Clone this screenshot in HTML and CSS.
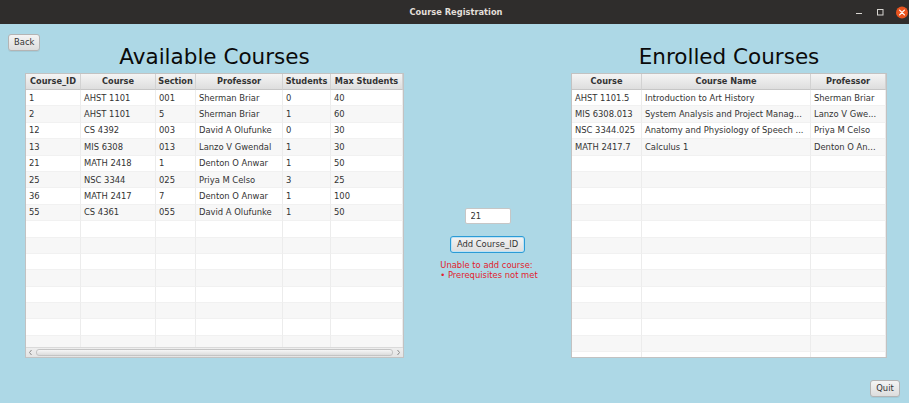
FILE: index.html
```html
<!DOCTYPE html>
<html lang="en">
<head>
<meta charset="utf-8">
<title>Course Registration</title>
<link rel="stylesheet" href="styles.css">
</head>
<body>
<div class="window">
  <header class="titlebar">
    <span class="title">Course Registration</span>
    <svg class="controls" width="59" height="24" viewBox="0 0 59 24" aria-hidden="true">
      <line x1="6" y1="13.5" x2="12" y2="13.5" stroke="#d8d6d2" stroke-width="1"/>
      <rect x="27.5" y="9.5" width="5.5" height="5.5" fill="none" stroke="#d8d6d2" stroke-width="1"/>
      <circle cx="52" cy="12.5" r="6" fill="#e9541f"/>
      <path d="M49.6 10.1 L54.4 14.9 M54.4 10.1 L49.6 14.9" stroke="#fff" stroke-width="1.2" stroke-linecap="round"/>
    </svg>
  </header>

  <main class="content">
    <button class="btn btn-back">Back</button>
    <h1 class="heading heading-left">Available Courses</h1>
    <h1 class="heading heading-right">Enrolled Courses</h1>

    <section class="tv tv-left">
      <div class="tv-viewport">
        <table class="grid">
          <colgroup><col style="width:55px"><col style="width:75px"><col style="width:40px"><col style="width:87px"><col style="width:48px"><col style="width:72px"></colgroup>
          <thead><tr><th>Course_ID</th><th>Course</th><th>Section</th><th>Professor</th><th>Students</th><th>Max Students</th></tr></thead>
          <tbody>
            <tr><td>1</td><td>AHST 1101</td><td>001</td><td>Sherman Briar</td><td>0</td><td>40</td></tr>
            <tr><td>2</td><td>AHST 1101</td><td>5</td><td>Sherman Briar</td><td>1</td><td>60</td></tr>
            <tr><td>12</td><td>CS 4392</td><td>003</td><td>David A Olufunke</td><td>0</td><td>30</td></tr>
            <tr><td>13</td><td>MIS 6308</td><td>013</td><td>Lanzo V Gwendal</td><td>1</td><td>30</td></tr>
            <tr><td>21</td><td>MATH 2418</td><td>1</td><td>Denton O Anwar</td><td>1</td><td>50</td></tr>
            <tr><td>25</td><td>NSC 3344</td><td>025</td><td>Priya M Celso</td><td>3</td><td>25</td></tr>
            <tr><td>36</td><td>MATH 2417</td><td>7</td><td>Denton O Anwar</td><td>1</td><td>100</td></tr>
            <tr><td>55</td><td>CS 4361</td><td>055</td><td>David A Olufunke</td><td>1</td><td>50</td></tr>
            <tr><td></td><td></td><td></td><td></td><td></td><td></td></tr>
            <tr><td></td><td></td><td></td><td></td><td></td><td></td></tr>
            <tr><td></td><td></td><td></td><td></td><td></td><td></td></tr>
            <tr><td></td><td></td><td></td><td></td><td></td><td></td></tr>
            <tr><td></td><td></td><td></td><td></td><td></td><td></td></tr>
            <tr><td></td><td></td><td></td><td></td><td></td><td></td></tr>
            <tr><td></td><td></td><td></td><td></td><td></td><td></td></tr>
            <tr><td></td><td></td><td></td><td></td><td></td><td></td></tr>
            <tr><td></td><td></td><td></td><td></td><td></td><td></td></tr>
          </tbody>
        </table>
      </div>
      <div class="hscroll">
        <svg class="arrow" width="9" height="9" viewBox="0 0 9 9"><path d="M5.5 2 L3.5 4.5 L5.5 7" fill="none" stroke="#8c8c8c" stroke-width="1"/></svg>
        <div class="thumb"></div>
        <svg class="arrow" width="9" height="9" viewBox="0 0 9 9"><path d="M3.5 2 L5.5 4.5 L3.5 7" fill="none" stroke="#8c8c8c" stroke-width="1"/></svg>
      </div>
    </section>

    <section class="center">
      <input class="field" type="text" value="21">
      <button class="btn btn-add">Add Course_ID</button>
      <p class="error">Unable to add course:<br>&bull; Prerequisites not met</p>
    </section>

    <section class="tv tv-right">
      <div class="tv-viewport">
        <table class="grid">
          <colgroup><col style="width:70px"><col style="width:169px"><col style="width:75px"></colgroup>
          <thead><tr><th>Course</th><th>Course Name</th><th>Professor</th></tr></thead>
          <tbody>
            <tr><td>AHST 1101.5</td><td>Introduction to Art History</td><td>Sherman Briar</td></tr>
            <tr><td>MIS 6308.013</td><td>System Analysis and Project Manag...</td><td>Lanzo V Gwe...</td></tr>
            <tr><td>NSC 3344.025</td><td>Anatomy and Physiology of Speech ...</td><td>Priya M Celso</td></tr>
            <tr><td>MATH 2417.7</td><td>Calculus 1</td><td>Denton O An...</td></tr>
            <tr><td></td><td></td><td></td></tr>
            <tr><td></td><td></td><td></td></tr>
            <tr><td></td><td></td><td></td></tr>
            <tr><td></td><td></td><td></td></tr>
            <tr><td></td><td></td><td></td></tr>
            <tr><td></td><td></td><td></td></tr>
            <tr><td></td><td></td><td></td></tr>
            <tr><td></td><td></td><td></td></tr>
            <tr><td></td><td></td><td></td></tr>
            <tr><td></td><td></td><td></td></tr>
            <tr><td></td><td></td><td></td></tr>
            <tr><td></td><td></td><td></td></tr>
            <tr><td></td><td></td><td></td></tr>
            <tr><td></td><td></td><td></td></tr>
          </tbody>
        </table>
      </div>
    </section>

    <button class="btn btn-quit">Quit</button>
  </main>
</div>
</body>
</html>
```

FILE: styles.css
```css
* { box-sizing: border-box; }

html, body {
  margin: 0;
  padding: 0;
  width: 909px;
  height: 403px;
  overflow: hidden;
  background: #add8e6;
  font-family: "DejaVu Sans", Verdana, sans-serif;
}

.window {
  width: 909px;
  height: 403px;
  display: flex;
  flex-direction: column;
}

/* ---- title bar ---- */
.titlebar {
  height: 24px;
  flex: none;
  background: #2f2d2c;
  display: grid;
  grid-template-columns: 1fr auto 1fr;
  align-items: center;
}
.title {
  grid-column: 2;
  color: #e2dfd9;
  font-weight: bold;
  font-size: 8.3px;
  padding-left: 3px;
}
.controls {
  grid-column: 3;
  justify-self: end;
  display: block;
}

/* ---- main content ---- */
.content {
  flex: 1;
  display: grid;
  grid-template-columns: 25px 379px 167px 316px 22px;
  grid-template-rows: 38.5px 285.5px auto;
  padding-top: 10px;
}

.heading {
  margin: 0 0 3px 0;
  font-weight: normal;
  font-size: 21.5px;
  line-height: 26px;
  color: #0a0a0a;
  text-align: center;
  align-self: end;
  grid-row: 1;
}
.heading-left { grid-column: 2; }
.heading-right { grid-column: 4; }

/* ---- buttons ---- */
.btn {
  font-family: "DejaVu Sans", Verdana, sans-serif;
  font-size: 8.4px;
  color: #333;
  height: 17px;
  padding: 0 5px;
  border: 1px solid #b4b4b4;
  border-radius: 3px;
  background: linear-gradient(#f4f4f4, #dddddd);
  box-shadow: 0 1px 0 rgba(0,0,0,0.06);
  line-height: 15px;
}
.btn-back {
  grid-column: 1 / 3;
  grid-row: 1;
  justify-self: start;
  align-self: start;
  margin-left: 8px;
  width: 32px;
  z-index: 1;
}
.btn-quit {
  grid-column: 4 / 6;
  grid-row: 3;
  justify-self: end;
  align-self: start;
  margin-top: 22px;
  margin-right: 9px;
  width: 30px;
}
.btn-add {
  width: 75px;
  margin-top: 12px;
  border-color: #2b9bd6;
  box-shadow: inset 0 0 0 1px #bfe3f5;
}

/* ---- center column ---- */
.center {
  grid-column: 3;
  grid-row: 2;
  display: flex;
  flex-direction: column;
  align-items: center;
  padding-top: 135px;
}
.field {
  width: 46px;
  height: 16.5px;
  border: 1px solid #c6c6c6;
  border-radius: 2px;
  background: #fff;
  font-family: "DejaVu Sans", Verdana, sans-serif;
  font-size: 8.4px;
  color: #333;
  padding: 0 0 0 5px;
  margin: 0;
}
.error {
  margin: 7px 0 0 3px;
  font-size: 8.4px;
  line-height: 10px;
  color: #e2202c;
  text-align: left;
}

/* ---- table views ---- */
.tv {
  grid-row: 2;
  background: #fff;
  border: 1px solid #c2c2c2;
  display: flex;
  flex-direction: column;
  overflow: hidden;
}
.tv-left { grid-column: 2; }
.tv-right { grid-column: 4; height: 285px; }

.tv-viewport {
  flex: 1;
  overflow: hidden;
}
.grid {
  table-layout: fixed;
  border-collapse: separate;
  border-spacing: 0;
  font-size: 8.4px;
  color: #333;
}
.grid th {
  height: 16.5px;
  padding: 0 2px;
  font-weight: bold;
  font-size: 8.2px;
  color: #333;
  background: linear-gradient(#f4f4f4, #dedede);
  border-right: 1px solid #d2d2d2;
  border-bottom: 1px solid #c6c6c6;
  text-align: center;
  white-space: nowrap;
  overflow: hidden;
}
.grid th:last-child { border-right: 1px solid #d2d2d2; }
.grid td {
  height: 16.4px;
  padding: 0 3px;
  border-right: 1px solid #ececec;
  border-bottom: 1px solid #f1f1f1;
  white-space: nowrap;
  overflow: hidden;
  text-align: left;
}
.grid tbody tr:nth-child(odd) td { background: #ffffff; }
.grid tbody tr:nth-child(even) td { background: #f7f7f7; }

.hscroll {
  flex: none;
  height: 10px;
  display: flex;
  align-items: center;
  background: linear-gradient(#eeeeee, #e4e4e4);
  border-top: 1px solid #dadada;
  padding: 0 0 0 0;
}
.arrow { flex: none; display: block; }
.thumb {
  flex: 1;
  height: 7px;
  margin: 0 1px;
  border: 1px solid #c4c4c4;
  border-radius: 3px;
  background: linear-gradient(#f6f6f6, #dcdcdc);
}
```
